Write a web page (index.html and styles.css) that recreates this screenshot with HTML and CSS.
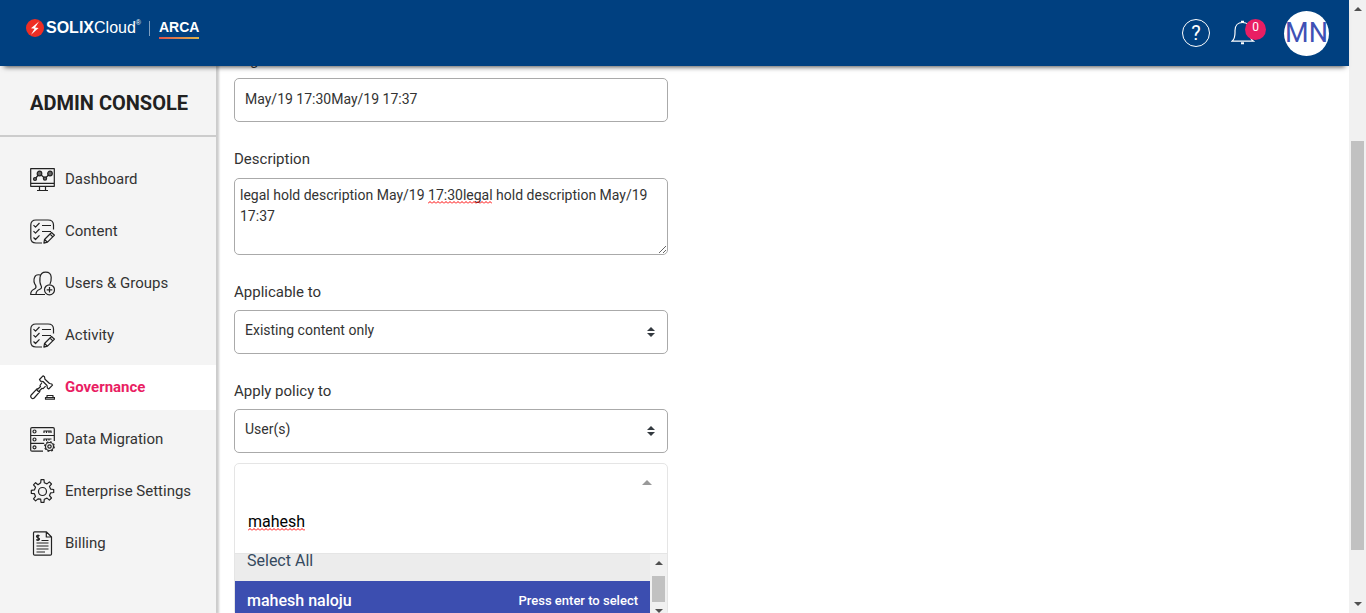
FILE: index.html
```html
<!DOCTYPE html>
<html lang="en">
<head>
<meta charset="utf-8">
<title>SOLIXCloud ARCA - Admin Console</title>
<link rel="stylesheet" href="styles.css">
</head>
<body>
<svg class="sprite" aria-hidden="true">
  <symbol id="i-list" viewBox="0 0 25 25">
    <path d="M12 24H6Q.8 24 .8 19V6Q.8 1 6 1H18Q23.5 1 23.5 6V10.500M3.500 6.200l2 2 4-4.200M3.500 12.200l2 2 4-4.200M3.500 18.500l2 2 4-4.200M12 6.500h9M12 12.500h9M14.500 20.500l7-7 3 2.700-7 7-3.600.9zM20 15l2.800 2.800M14.500 20.500l3 2.800"/>
  </symbol>
</svg>
<div class="window">
  <div class="page">
    <header class="topbar">
      <a class="brand" href="#" aria-label="SOLIXCloud ARCA">
        <svg class="brand-mark" viewBox="0 0 18 18" aria-hidden="true"><circle cx="9" cy="9" r="9" fill="#ee2e24"/><path d="M13 2.500 5 9.300l3.600.5L5 15.800l7.600-6.700-3.500-.6z" fill="#fff"/></svg>
        <span class="brand-name"><b>SOLIX</b>Cloud<sup>®</sup></span>
        <span class="brand-rule"></span>
        <span class="brand-product">ARCA</span>
      </a>
      <div class="tools">
        <button class="tool help" type="button" aria-label="Help">?</button>
        <button class="tool bell" type="button" aria-label="Notifications">
          <svg viewBox="0 0 24 25" aria-hidden="true"><path d="M1 21.200C4.500 18.500 4 15 4 10.500 4 5.500 7 2.500 11.500 2.500S19 5.500 19 10.500c0 4.500-.5 8 3.500 10.700z"/><path d="M10 1.800h3M10 23.300h3" stroke-width="2"/></svg>
          <span class="badge">0</span>
        </button>
        <button class="tool avatar" type="button">MN</button>
      </div>
    </header>
    <div class="body">
      <aside class="sidebar">
        <h1 class="side-title">ADMIN CONSOLE</h1>
        <nav class="nav">
          <a class="nav-item" href="#"><svg viewBox="0 0 25 25"><path d="M.7 1.700h23.600v17.600H.7zM.7 16.300h23.600M9.500 19.500v3.500M15.500 19.500v3.500M7 23.500h11M5 12l4.500-5.500 5.500 5L20 6.500"/><g fill="#666"><circle cx="5" cy="12" r="1.500"/><circle cx="9.500" cy="6.500" r="2.300"/><circle cx="15" cy="11.500" r="1.600"/><circle cx="20" cy="6.500" r="2.300"/></g></svg><span>Dashboard</span></a>
          <a class="nav-item" href="#"><svg><use href="#i-list"/></svg><span>Content</span></a>
          <a class="nav-item" href="#"><svg viewBox="0 0 25 25"><path d="M15 23.500H.7c0-3 .6-4.300 3.300-5.300 1.800-.7 2.500-1.500 1.800-3.500C3.600 11.500 3.500 9 4.500 6.500 5.300 4.200 8 3.300 10.300 4M6 23.500c0-3.300 1.500-4.300 3.800-5.200 1.700-.7 2.200-1.800 1.200-3.800-1.200-2-1.400-4.500-1-8 .4-3.300 2.500-5.300 5.700-5.300s5.300 2 5.500 5c.1 2.500-.2 4.700-1.200 6.800"/><circle cx="19.500" cy="18.800" r="5"/><path d="M19.500 16v5.600M16.700 18.800h5.600"/></svg><span>Users &amp; Groups</span></a>
          <a class="nav-item" href="#"><svg><use href="#i-list"/></svg><span>Activity</span></a>
          <a class="nav-item is-active" href="#" aria-current="page"><svg viewBox="0 0 25 25"><path d="M9.500 4.500 13 .8l1.500 1 .5 2.500 4.500 4.200 2.300.5.700 1.200-3.800 3.800-1.300-1-.4-2.500-4-4-2.500-.4zM12 7.500l-2 3 .5 1L8 14l-.8-.3-6 6.300c-1.500 2 1 4.500 3 3l5.600-6.300-.3-1 2.600-2.400 1 .4 2.500-2.500M6.500 14.500l3 3M17 20.500h6v2h-6zM15.500 24.200v-1.700h9v1.700z"/></svg><span>Governance</span></a>
          <a class="nav-item" href="#"><svg viewBox="0 0 25 25"><path d="M13 24.200H2Q.7 24.200.7 23V2Q.7.700 2 .7H23q1.300 0 1.300 1.300V14M.7 8.500h23.600M.7 16.300h13.500"/><circle cx="4.500" cy="4.500" r="1.500"/><circle cx="4.500" cy="12.500" r="1.500"/><circle cx="4.500" cy="20.300" r="1.500"/><path d="M13.500 4h8M14 4v2M16.500 4v2M19 4v2M21 4v2M13.500 12h8M14 12v2M16.500 12v2M19 12v1.500"/><circle cx="19.500" cy="19.500" r="4" /><circle cx="19.500" cy="19.500" r="1.700"/><circle cx="19.500" cy="19.500" r="4.800" stroke-dasharray="1.900 1.870"/></svg><span>Data Migration</span></a>
          <a class="nav-item" href="#"><svg viewBox="0 0 25 25"><path d="M10.700 3.800 11 .7h3l.3 3.100 2.700 1.100 2.400-2 2.100 2.100-2 2.400 1.100 2.700 3.100.4v3l-3.100.4-1.100 2.700 2 2.400-2.100 2.100-2.400-2-2.700 1.100-.3 3.100h-3l-.3-3.100L8 19.900l-2.400 2-2.100-2.100 2-2.400-1.100-2.700-3.100-.4v-3l3.100-.4L5.500 8.200l-2-2.400 2.100-2.100 2.400 2z"/><circle cx="12.500" cy="12.500" r="4"/></svg><span>Enterprise Settings</span></a>
          <a class="nav-item" href="#"><svg viewBox="0 0 25 25"><path d="M4.500.8H16.500L21.500 6V23q0 1.200-1.200 1.200H4.700q-1.200 0-1.200-1.200V2Q3.500.8 4.500.8zM16.300.8V6h5.200M11.500 9.500h7M6.500 12h12M6.500 15h12M6.500 18h12M6.500 21h8.500" /><path d="M9.500 5c-1-1-3-.7-3 .6 0 1.600 3 .9 3 2.500 0 1.300-2.200 1.400-3.200.4M8 3.500v6.500"/></svg><span>Billing</span></a>
        </nav>
      </aside>
      <main class="content">
        <form class="form">
          <div class="field">
            <label for="name">Legal Hold Name</label>
            <input class="control" id="name" type="text" value="May/19 17:30May/19 17:37">
          </div>
          <div class="field field-desc">
            <label for="desc">Description</label>
            <div class="area">
              <textarea class="control" id="desc" spellcheck="false">legal hold description May/19 17:30legal hold description May/19 17:37</textarea>
              <svg class="wave wave-desc" aria-hidden="true"><defs><pattern id="wave" width="4" height="3" patternUnits="userSpaceOnUse"><path d="M0 2.500 2 .5 4 2.500" fill="none" stroke="#f00"/></pattern></defs><rect width="100%" height="3" fill="url(#wave)"/></svg>
            </div>
          </div>
          <div class="field">
            <label for="applicable">Applicable to</label>
            <div class="select"><select class="control" id="applicable"><option>Existing content only</option></select><svg class="updown" viewBox="0 0 8 10" aria-hidden="true"><path d="M0 4 4 0l4 4zM0 6h8L4 10z"/></svg></div>
          </div>
          <div class="field">
            <label for="policy">Apply policy to</label>
            <div class="select"><select class="control" id="policy"><option>User(s)</option></select><svg class="updown" viewBox="0 0 8 10" aria-hidden="true"><path d="M0 4 4 0l4 4zM0 6h8L4 10z"/></svg></div>
          </div>
          <div class="picker">
            <button class="picker-toggle" type="button" aria-label="Close list"><svg viewBox="0 0 10 5"><path d="M0 5 5 0l5 5z"/></svg></button>
            <div class="picker-search">
              <input type="text" value="mahesh" aria-label="Search users" spellcheck="false">
              <svg class="wave wave-search" aria-hidden="true"><rect width="100%" height="3" fill="url(#wave)"/></svg>
            </div>
            <div class="picker-list">
              <div class="options">
                <button class="option all" type="button">Select All</button>
                <button class="option current" type="button"><span>mahesh naloju</span><span class="hint">Press enter to select</span></button>
              </div>
              <div class="bar bar-list" aria-hidden="true"><i class="arrow up"></i><i class="thumb"></i><i class="arrow down"></i></div>
            </div>
          </div>
        </form>
      </main>
    </div>
  </div>
  <div class="bar bar-page" aria-hidden="true"><i class="arrow up"></i><i class="thumb"></i><i class="arrow down"></i></div>
</div>
</body>
</html>
```

FILE: styles.css
```css
* { box-sizing: border-box; }
body { margin: 0; font-family: Roboto, "Liberation Sans", sans-serif; color: #333; background: #fff; }
button, input, textarea, select { font: inherit; color: inherit; margin: 0; }
button { border: 0; background: none; padding: 0; }
a { color: inherit; text-decoration: none; }
.sprite { position: absolute; width: 0; height: 0; }

.window { display: flex; height: 100vh; overflow: hidden; }
.page { flex: 1; min-width: 0; display: flex; flex-direction: column; }

.topbar { position: relative; z-index: 2; flex: none; height: 66px; padding: 0 20px 0 26px; display: flex; justify-content: space-between; background: #004080; color: #fff; box-shadow: 0 5px 5px -4px rgba(0, 0, 0, .7); }
.brand { display: flex; align-items: center; height: 20px; margin-top: 18px; font-family: "Liberation Sans", Arial, sans-serif; }
.brand-mark { width: 18px; height: 18px; margin-right: 2px; }
.brand-name { font-size: 16px; line-height: 20px; }
.brand-name sup { font-size: 7px; line-height: 1; vertical-align: 8px; }
.brand-rule { width: 1px; height: 15px; margin: 0 9px 0 8px; background: #7f9fc0; }
.brand-product { padding-bottom: 1px; font: 700 14px/18px "Liberation Sans", sans-serif; border-bottom: 2px solid; border-image: linear-gradient(90deg, #e0504b, #dcb94c) 1; }
.tools { display: flex; align-items: center; }
.tool { cursor: pointer; }
.help { width: 28px; height: 28px; border: 1px solid #fff; border-radius: 50%; font-size: 20px; line-height: 26px; margin-right: 21px; }
.bell { position: relative; width: 35px; height: 26px; margin-right: 18px; text-align: left; }
.bell svg { width: 24px; height: 25px; fill: none; stroke: #fff; stroke-width: 1.200; }
.badge { position: absolute; top: -1px; right: 0; width: 21px; height: 21px; border-radius: 50%; background: #e91e63; font-size: 12px; line-height: 17px; text-align: center; }
.avatar { width: 45px; height: 45px; border-radius: 50%; background: #fff; color: #3f51b5; font-size: 27px; line-height: 45px; }

.body { flex: 1; min-height: 0; display: flex; }
.sidebar { flex: none; width: 216px; background: #f4f4f4; box-shadow: 2px 0 2px 1px #ccc; }
.side-title { margin: 0; padding: 3px 28px 0 30px; font-size: 20px; font-weight: 700; height: 71px; line-height: 68px; color: #212121; border-bottom: 2px solid #ccc; white-space: nowrap; }
.nav { display: flex; flex-direction: column; gap: 7px; padding-top: 20px; }
.nav-item { display: flex; align-items: center; gap: 10px; height: 45px; padding: 0 25px 0 30px; font-size: 15px; white-space: nowrap; color: #333; }
.nav-item span { padding-bottom: 2px; }
.nav-item svg { flex: none; width: 25px; height: 25px; fill: none; stroke: #222; stroke-width: 1.200; stroke-linejoin: round; }
.nav-item.is-active { background: #fff; color: #e91e63; font-weight: 700; }

.content { flex: 1; min-width: 0; padding-left: 18px; }
.form { width: 434px; max-width: 100%; margin-top: -17px; }
.field { display: flex; flex-direction: column; gap: 7px; margin-bottom: 26px; }
.field-desc { gap: 8px; }
.field label { font-size: 15px; line-height: 22px; }
.control { display: block; width: 100%; height: 44px; padding: 0 10px 3px; border: 1px solid #aaa; border-radius: 5px; background: #fff; font-size: 14px; line-height: 21px; color: #333; outline: 0; }
.area, .select, .picker-search { position: relative; }
textarea.control { height: 77px; padding: 6px 5px 5px; resize: both; }
select.control { appearance: none; }
.updown { position: absolute; right: 13px; top: 17px; width: 8px; height: 10px; fill: #343a40; }
.wave { position: absolute; height: 3px; }
.wave-desc { left: 194px; top: 23px; width: 64px; }

.picker { margin-top: -16px; border: 1px solid #e5e5e5; border-radius: 5px; }
.picker-toggle { display: flex; justify-content: flex-end; align-items: center; width: 100%; height: 37px; padding: 0 15px; }
.picker-toggle svg { width: 10px; height: 5px; fill: #999; }
.picker-search { height: 52px; padding: 8px 13px; }
.picker-search input { display: block; width: 100%; height: 24px; padding: 0; border: 0; outline: 0; background: none; font-size: 16px; color: #000; }
.wave-search { left: 13px; top: 27px; width: 57px; }
.picker-list { display: flex; height: 62px; border-top: 1px solid #e5e5e5; }
.options { flex: 1; display: flex; flex-direction: column; }
.option { display: flex; justify-content: space-between; align-items: center; flex: none; padding: 0 12px 2px; font-size: 16px; text-align: left; }
.all { height: 27px; padding-bottom: 15px; background: #ececec; color: #35495e; }
.current { height: 40px; background: #3c4eb0; color: #fff; font-weight: 500; }
.hint { font-size: 13px; }

.bar { flex: none; width: 17px; display: flex; flex-direction: column; align-items: center; background: #f1f1f1; }
.thumb { width: 13px; background: #c1c1c1; }
.arrow { flex: none; width: 0; height: 0; border: solid transparent; border-width: 0 4px; }
.up { border-bottom: 4px solid #505050; }
.down { border-top: 4px solid #505050; }
.bar-page { padding: 7px 0; }
.bar-page .up { margin-bottom: 130px; }
.bar-page .thumb { height: 409px; }
.bar-page .down { margin-top: auto; }
.bar-list { padding: 7px 0 2px; }
.bar-list .thumb { height: 26px; margin: 11px 0 7px; }
```
